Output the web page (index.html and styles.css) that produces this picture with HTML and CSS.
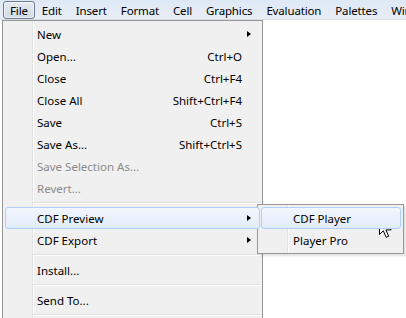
FILE: index.html
```html
<!DOCTYPE html>
<html lang="en">
<head>
  <meta charset="UTF-8">
  <title>File menu</title>
  <link rel="stylesheet" href="styles.css">
</head>
<body>
  <div class="menubar">
    <span class="bar-item open">File</span>
    <span class="bar-item">Edit</span>
    <span class="bar-item">Insert</span>
    <span class="bar-item">Format</span>
    <span class="bar-item">Cell</span>
    <span class="bar-item">Graphics</span>
    <span class="bar-item">Evaluation</span>
    <span class="bar-item">Palettes</span>
    <span class="bar-item">Window</span>
  </div>

  <div class="menu main-menu">
    <div class="item"><span class="label">New</span><span class="arrow"></span></div>
    <div class="item"><span class="label">Open...</span><span class="key">Ctrl+O</span></div>
    <div class="item"><span class="label">Close</span><span class="key">Ctrl+F4</span></div>
    <div class="item"><span class="label">Close All</span><span class="key">Shift+Ctrl+F4</span></div>
    <div class="item"><span class="label">Save</span><span class="key">Ctrl+S</span></div>
    <div class="item"><span class="label">Save As...</span><span class="key">Shift+Ctrl+S</span></div>
    <div class="item disabled"><span class="label">Save Selection As...</span></div>
    <div class="item disabled"><span class="label">Revert...</span></div>
    <div class="sep"></div>
    <div class="item active"><span class="label">CDF Preview</span><span class="arrow"></span></div>
    <div class="item"><span class="label">CDF Export</span><span class="arrow"></span></div>
    <div class="sep"></div>
    <div class="item"><span class="label">Install...</span></div>
    <div class="sep"></div>
    <div class="item"><span class="label">Send To...</span></div>
    <div class="sep"></div>
  </div>

  <div class="menu sub-menu">
    <div class="item active"><span class="label">CDF Player</span></div>
    <div class="item"><span class="label">Player Pro</span></div>
  </div>

  <!-- mouse pointer -->
  <svg class="cursor" width="15" height="23" viewBox="0 0 15 23">
    <path d="M1.5 1.5 L1.5 18.5 L5.3 14.8 L8.2 21.3 L10.7 20.2 L7.9 13.9 L13.2 13.9 Z" fill="#fff" stroke="#000" stroke-width="1" stroke-linejoin="miter"/>
  </svg>
</body>
</html>
```

FILE: styles.css
```css
body {
  margin: 0;
  width: 406px;
  height: 318px;
  overflow: hidden;
  position: relative;
  background: #fff;
  font-family: "Noto Sans", "Open Sans", Arial, sans-serif;
  font-size: 11.5px;
  color: #000;
}
.menubar {
  height: 20px;
  display: flex;
  align-items: center;
  padding-left: 3px;
  background: linear-gradient(#dee8f5, #e9eef6);
  border-bottom: 1px solid #d9dde3;
  box-sizing: border-box;
  white-space: nowrap;
  overflow: hidden;
}
.bar-item {
  padding: 0 6px;
  height: 18px;
  line-height: 17px;
  border: 1px solid transparent;
  box-sizing: border-box;
  letter-spacing: -0.15px;
}
.bar-item.open {
  border-color: #6c7b8e;
  border-radius: 3px;
  background: linear-gradient(#e6ebf1, #d3dae3);
  box-shadow: inset 0 0 0 1px rgba(255, 255, 255, 0.6);
}
.menu {
  position: absolute;
  background: #f0f0f0;
  border: 1px solid #979797;
  box-sizing: border-box;
  padding: 2px 0;
}
.menu::before {
  content: "";
  position: absolute;
  top: 0;
  bottom: 0;
  width: 1px;
  background: #e2e3e3;
  box-shadow: 1px 0 0 #fff;
}
.main-menu {
  left: 2px;
  top: 20px;
  width: 261px;
  height: 298px;
  border-bottom: none;
}
.main-menu::before {
  left: 29px;
}
.sub-menu {
  left: 257px;
  top: 204px;
  width: 147px;
  height: 50px;
  box-shadow: 2px 2px 2px rgba(0, 0, 0, 0.12);
}
.sub-menu::before {
  left: 29px;
}
.item {
  position: relative;
  display: flex;
  align-items: center;
  height: 22px;
  margin: 0 2px;
  padding-left: 31px;
  padding-right: 17px;
  border: 1px solid transparent;
  border-radius: 3px;
  box-sizing: border-box;
  z-index: 1;
}
.sub-menu .item {
  margin-left: 3px;
}
.item .label {
  flex: 1;
}
.item.disabled {
  color: #8b8b8b;
}
.item.active {
  border-color: #aecff7;
  background: linear-gradient(#f2f6fc, #e2ecf9);
}
.key {
  text-align: right;
}
.arrow {
  position: absolute;
  right: 8px;
  top: 7px;
  width: 0;
  height: 0;
  border-top: 3.5px solid transparent;
  border-bottom: 3.5px solid transparent;
  border-left: 4px solid #000;
}
.sep {
  height: 1px;
  margin: 3px 1px 4px 30px;
  background: #e0e0e0;
  box-shadow: 0 1px 0 #fff;
  position: relative;
  z-index: 1;
}
.cursor {
  position: absolute;
  left: 378px;
  top: 216px;
}
```
